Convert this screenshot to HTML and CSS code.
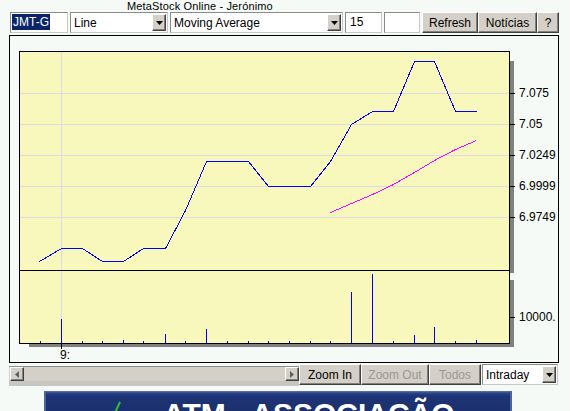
FILE: index.html
```html
<!DOCTYPE html>
<html>
<head>
<meta charset="utf-8">
<link rel="stylesheet" href="styles.css">
</head>
<body>
<div class="title">MetaStock Online - Jerónimo</div>
<div class="toolbar">
  <div class="field w-sym"><span class="sel">JMT-G</span></div>
  <div class="combo w-line"><span class="combo-text">Line</span><span class="drop"><svg width="7" height="4" viewBox="0 0 7 4"><path d="M0 0H7L3.5 4Z" fill="#000"/></svg></span></div>
  <div class="combo w-ma"><span class="combo-text">Moving Average</span><span class="drop"><svg width="7" height="4" viewBox="0 0 7 4"><path d="M0 0H7L3.5 4Z" fill="#000"/></svg></span></div>
  <div class="field w-num">15</div>
  <div class="field w-num2"></div>
  <div class="btn-group">
    <button class="btn w-refresh">Refresh</button>
    <button class="btn w-news">Notícias</button>
    <button class="btn w-help">?</button>
  </div>
</div>
<div class="frame">
  <svg class="chart" width="548" height="326" viewBox="10 36 548 326">
    <rect x="29" y="61" width="485" height="212" fill="#808080"/>
    <rect x="29" y="280" width="485" height="67" fill="#808080"/>
    <rect x="19.5" y="51.5" width="490" height="292" fill="#f8f8bc" stroke="#000"/>
    <path class="grid" d="M20 93.5H509M20 124.5H509M20 155.5H509M20 186.5H509M20 217.5H509M61.5 52V343"/>
    <path class="axis" d="M19 270.5H510M510 93.5H515M510 124.5H515M510 155.5H515M510 186.5H515M510 217.5H515M510 317.5H515M61.5 344V349"/>
    <path class="vol" d="M40.5 341V343M61.5 319V343M82.5 341V343M102.5 341V343M123.5 340V343M143.5 341V343M165.5 334V343M185.5 341V343M206.5 329V343M227.5 341V343M248.5 341V343M268.5 341V343M289.5 341V343M310.5 341V343M330.5 341V343M351.5 292V343M372.5 274V343M393.5 341V343M414.5 335V343M434.5 327V343M455.5 341V343M476.5 340V343"/>
    <polyline class="price" points="39.5,261.5 61.5,248.5 82.5,248.5 102.5,261.5 123.5,261.5 143.5,248.5 165.5,248.5 185.5,210.5 206.5,161.5 227.5,161.5 248.5,161.5 268.5,186.5 289.5,186.5 310.5,186.5 330.5,161.5 351.5,124.5 372.5,111.5 393.5,111.5 414.5,61.5 434.5,61.5 455.5,111.5 476.5,111.5"/>
    <polyline class="ma" points="330.5,212.5 351.5,203.5 372.5,194.5 393.5,184.5 414.5,172.5 434.5,160.5 455.5,149.5 476.5,140.5"/>
    <text class="lbl" x="519" y="97">7.075</text>
    <text class="lbl" x="519" y="128">7.05</text>
    <text class="lbl" x="519" y="159">7.0249</text>
    <text class="lbl" x="519" y="190">6.9999</text>
    <text class="lbl" x="519" y="221">6.9749</text>
    <text class="lbl" x="519" y="321">10000.</text>
    <text class="lbl" x="60" y="359">9:</text>
  </svg>
</div>
<div class="bottombar">
  <div class="hscroll">
    <span class="sarrow"><svg width="4" height="7" viewBox="0 0 4 7"><path d="M4 0V7L0 3.5Z" fill="#606060"/></svg></span>
    <span class="track"></span>
    <span class="sarrow"><svg width="4" height="7" viewBox="0 0 4 7"><path d="M0 0V7L4 3.5Z" fill="#606060"/></svg></span>
  </div>
  <button class="btn w-zin">Zoom In</button>
  <button class="btn w-zout" disabled>Zoom Out</button>
  <button class="btn w-todos" disabled>Todos</button>
  <div class="combo w-intra"><span class="combo-text">Intraday</span><span class="drop"><svg width="7" height="4" viewBox="0 0 7 4"><path d="M0 0H7L3.5 4Z" fill="#000"/></svg></span></div>
</div>
<div class="banner">
  <svg class="logo" width="10" height="22" viewBox="0 0 10 22"><path d="M2 21L9 6" stroke="#2bbf3a" stroke-width="2"/></svg>
  <span class="banner-text">ATM - ASSOCIAÇÃO</span>
</div>
</body>
</html>
```
FILE: styles.css
```css
body {
  margin: 0;
  width: 570px;
  height: 411px;
  overflow: hidden;
  background: #f5faf6;
  font-family: "Liberation Sans", Arial, sans-serif;
  font-size: 12px;
  color: #000;
}

.title {
  height: 12px;
  padding-left: 127px;
  font-size: 11px;
  line-height: 13px;
  letter-spacing: 0.15px;
  white-space: nowrap;
}

.toolbar {
  display: flex;
  height: 21px;
  margin-left: 10px;
  gap: 2px;
}

.field {
  box-sizing: border-box;
  height: 21px;
  background: #fff;
  border: 1px solid;
  border-color: #8a8a8a #c8c8c8 #c8c8c8 #8a8a8a;
  padding-left: 4px;
  line-height: 19px;
  white-space: nowrap;
}

.w-sym { width: 58px; padding: 0 0 0 1px; }
.w-num { width: 37px; }
.w-num2 { width: 36px; }

.sel {
  display: inline-block;
  margin-top: 0;
  height: 16px;
  line-height: 16px;
  padding: 0 1px;
  background: #0a246a;
  color: #fff;
}

.combo {
  box-sizing: border-box;
  display: flex;
  align-items: center;
  height: 21px;
  background: #fff;
  border: 1px solid;
  border-color: #8a8a8a #c8c8c8 #c8c8c8 #8a8a8a;
  padding-right: 1px;
}

.combo-text {
  flex: 1;
  padding-left: 3px;
  white-space: nowrap;
  overflow: hidden;
}

.drop {
  box-sizing: border-box;
  width: 14px;
  height: 17px;
  display: flex;
  align-items: center;
  justify-content: center;
  background: #d4d0c8;
  border: 1px solid;
  border-color: #fff #404040 #404040 #fff;
  box-shadow: inset -1px -1px #808080;
}

.w-line { width: 98px; }
.w-ma { width: 173px; }
.w-intra { width: 76px; margin-left: 1px; }

.btn-group {
  display: flex;
}

.btn {
  box-sizing: border-box;
  height: 21px;
  margin: 0;
  padding: 0;
  background: #d4d0c8;
  border: 1px solid;
  border-color: #fff #404040 #404040 #fff;
  box-shadow: inset -1px -1px #808080;
  font-family: "Liberation Sans", Arial, sans-serif;
  font-size: 12px;
  color: #000;
  text-align: center;
}

.btn:disabled {
  color: #9a9894;
}

.w-refresh { width: 56px; }
.w-news { width: 59px; }
.w-help { width: 22px; }
.w-zin { width: 62px; }
.w-zout { width: 68px; }
.w-todos { width: 52px; }

.frame {
  box-sizing: border-box;
  width: 550px;
  height: 328px;
  margin: 2px 0 0 9px;
  border: 1px solid #000;
}

.chart {
  display: block;
}

.grid {
  stroke: #dcdce6;
  stroke-width: 1;
  fill: none;
}

.axis {
  stroke: #000;
  stroke-width: 1;
  fill: none;
}

.vol {
  stroke: #0000ff;
  stroke-width: 1;
  fill: none;
}

.price {
  fill: none;
  stroke: #0000ff;
  stroke-width: 1;
  shape-rendering: crispEdges;
}

.ma {
  fill: none;
  stroke: #ff00ff;
  stroke-width: 1;
  shape-rendering: crispEdges;
}

.lbl {
  font-family: "Liberation Sans", Arial, sans-serif;
  font-size: 12px;
  fill: #000;
}

.bottombar {
  display: flex;
  align-items: flex-start;
  height: 21px;
  margin: 1px 0 0 9px;
}

.hscroll {
  box-sizing: border-box;
  display: flex;
  width: 290px;
  height: 20px;
  margin-top: 2px;
  padding: 0 0 0 1px;
  background: #d4d0c8;
  border-top: 1px solid #8c8c8c;
  border-bottom: 5px solid #c6c6c2;
}

.sarrow {
  box-sizing: border-box;
  width: 14px;
  height: 14px;
  display: flex;
  align-items: center;
  justify-content: center;
  background: #d4d0c8;
  border: 1px solid;
  border-color: #fff #404040 #404040 #fff;
  box-shadow: inset -1px -1px #808080;
}

.track {
  flex: 1;
}

.banner {
  display: flex;
  align-items: flex-start;
  width: 468px;
  height: 30px;
  margin: 6px 0 0 44px;
  background: linear-gradient(to bottom, #6079b2 0, #2c4488 2px, #1d3374 5px, #1a2f6a 100%);
  box-shadow: inset 2px 0 #4864a2, inset -2px 0 #4864a2;
}

.logo {
  display: block;
  margin: 5px 0 0 67px;
}

.banner-text {
  margin: 8px 0 0 42px;
  font-size: 30px;
  font-weight: bold;
  line-height: 30px;
  color: #fff;
  white-space: nowrap;
}
```
